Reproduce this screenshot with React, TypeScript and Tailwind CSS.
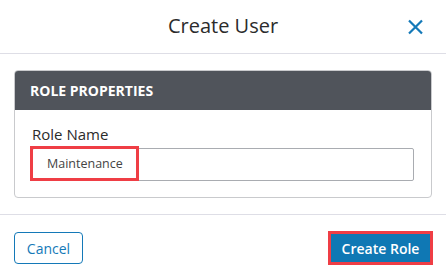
import React from "react";

export default function App() {
  return (
    <div
      className="w-[446px] h-[276px] bg-white overflow-hidden"
      style={{ fontFamily: '"Open Sans", "Liberation Sans", sans-serif' }}
    >
      <div className="relative h-[54px] border-b border-[#dedee6] flex items-center justify-center">
        <div className="text-[20px] text-[#2b2b2b] leading-none -mt-[1px]">Create User</div>
        <button className="absolute left-[406px] top-[17px] w-[19px] h-[19px] flex items-center justify-center">
          <svg width="17" height="16" viewBox="0 0 17 16">
            <path d="M2 1.5 L15 14.5 M15 1.5 L2 14.5" stroke="#1479b8" strokeWidth="2.2" fill="none" />
          </svg>
        </button>
      </div>
      <div className="px-[14px] pt-[16px] pb-[16px] border-b border-[#dedee6]">
        <div className="rounded-[4px] border border-[#c9cacd] overflow-hidden">
          <div className="h-[40px] bg-[#50545b] flex items-center px-[16px] -mx-px -mt-px">
            <span className="text-[14px] font-bold text-white tracking-[0px]">ROLE PROPERTIES</span>
          </div>
          <div className="px-[17px] pt-[14px] pb-[16px]">
            <div className="text-[15px] text-[#2b2b2b] leading-[20px] mb-[4px]">Role Name</div>
            <div className="relative h-[33px] border border-[#a9acb1] rounded-[2px] flex items-center pl-[14px]">
              <span className="text-[12.5px] text-[#444]">Maintenance</span>
              <div className="absolute left-[-3px] top-[-3px] w-[109px] h-[35px] border-[3px] border-[#ef3e45]" />
            </div>
          </div>
        </div>
      </div>
      <div className="flex justify-between items-center px-[14px] pt-[16px]">
        <button className="w-[69px] h-[32px] border border-[#1479b8] rounded-[4px] text-[14px] text-[#1479b8] flex items-center justify-center">
          Cancel
        </button>
        <div className="border-[3px] border-[#ef3e45] -mr-[1px]">
          <button className="w-[99px] h-[28px] bg-[#0f78b4] text-[14px] text-white font-semibold flex items-center justify-center">
            Create Role
          </button>
        </div>
      </div>
    </div>
  );
}
